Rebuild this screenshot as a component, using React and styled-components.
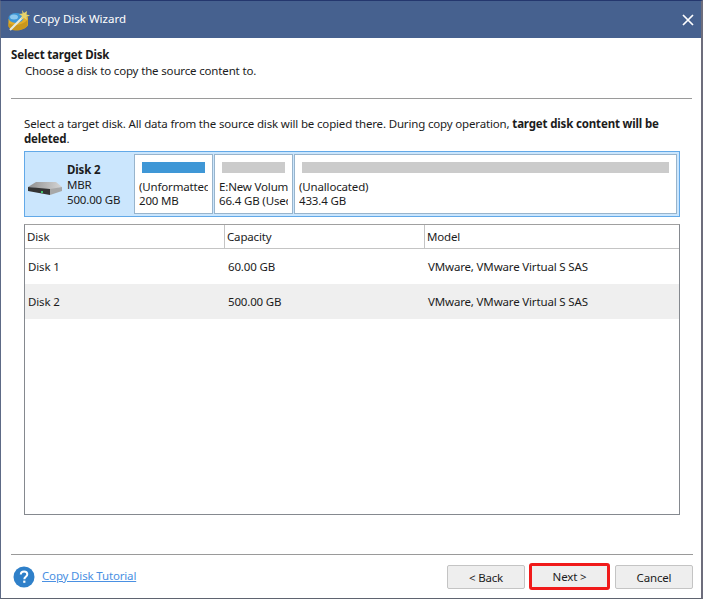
import React from "react";
import styled, { createGlobalStyle } from "styled-components";

const Global = createGlobalStyle`
  html, body { margin: 0; padding: 0; background: #fff; }
  body { font-family: "Noto Sans", "Open Sans", sans-serif; font-size: 11.5px; letter-spacing: -0.16px; color: #1c1c1c; }
`;

const Win = styled.div`
  width: 703px;
  height: 599px;
  box-sizing: border-box;
  display: flex;
  flex-direction: column;
  background: #fff;
  border-left: 1px solid #5d6a86;
  border-right: 2px solid #6d6d7c;
  border-bottom: 1px solid #5f6470;
  border-top: 1px solid #24376e;
  overflow: hidden;
`;
const TitleBar = styled.div`
  height: 37px;
  flex: none;
  background: #46618f;
  display: flex;
  align-items: center;
  padding: 0 7px 0 6px;
  color: #fff;
  font-size: 11.5px;
  letter-spacing: 0;
`;
const TitleText = styled.span`
  margin: 0 0 2px 2px;
  flex: 1;
`;
const Header = styled.div`
  padding: 9px 9px 0 10px;
`;
const Heading = styled.div`
  font-weight: 700;
  line-height: 16px;
`;
const SubHeading = styled.div`
  padding-left: 14px;
  line-height: 16px;
`;
const Rule = styled.div`
  height: 1px;
  background: #9a9a9a;
  margin: ${(p) => p.$margin};
`;
const Content = styled.div`
  padding: 0 21px 0 23px;
  flex: 1;
  display: flex;
  flex-direction: column;
`;
const Intro = styled.div`
  line-height: 15px;
  margin-top: 17px;
  height: 30px;
`;
const DiskMap = styled.div`
  margin-top: 5px;
  height: 66px;
  box-sizing: border-box;
  display: flex;
  gap: 1px;
  border: 1px solid #62a9e8;
  background: #cbe6fd;
  padding: 2px;
`;
const DiskInfo = styled.div`
  width: 106px;
  flex: none;
  display: flex;
  align-items: center;
  gap: 5px;
  padding-left: 1px;
  box-sizing: border-box;
  line-height: 15px;
`;
const DiskGlyph = styled.div`
  display: flex;
  margin-top: 8px;
`;
const DiskName = styled.div`
  font-weight: 700;
`;
const Partition = styled.div`
  box-sizing: border-box;
  width: ${(p) => p.$width};
  flex: ${(p) => (p.$width ? "none" : 1)};
  background: #fff;
  border: 1px solid #98b4cc;
  padding: 7px 4px 0;
`;
const PartLabel = styled.div`
  line-height: 14px;
  white-space: nowrap;
  overflow: hidden;
`;
const Usage = styled.div`
  height: 11px;
  margin: 0 3px 7px;
  background: ${(p) => p.$color};
`;
const Grid = styled.div`
  margin-top: 7px;
  height: 291px;
  box-sizing: border-box;
  border: 1px solid #85898f;
  border-top-color: #a0a0a0;
`;
const Row = styled.div`
  display: grid;
  grid-template-columns: 200px 200px 1fr;
  height: ${(p) => p.$height};
  background: ${(p) => p.$bg || "transparent"};
  align-items: center;
`;
const HeadRow = styled(Row)`
  border-bottom: 1px solid #c4c4c4;
  box-sizing: border-box;
  align-items: stretch;
`;
const HeadCell = styled.div`
  display: flex;
  align-items: center;
  padding-left: 2px;
  border-right: ${(p) => (p.$last ? "none" : "1px solid #c4c4c4")};
`;
const Cell = styled.div`
  padding-left: 3px;
`;
const Footer = styled.div`
  height: 43px;
  box-sizing: border-box;
  padding: 1px 8px 0 12px;
  display: flex;
  align-items: center;
`;
const HelpLink = styled.a`
  color: #4a90e2;
  text-decoration: underline;
  margin: 0 0 4px 7px;
  flex: 1;
`;
const Btn = styled.button`
  box-sizing: border-box;
  width: 78px;
  height: 24px;
  background: #eeeeee;
  border: 1px solid #c4c4c4;
  border-radius: 2px;
  font: inherit;
  letter-spacing: inherit;
  color: #1c1c1c;
  padding: 0;
`;
const NextBtn = styled(Btn)`
  width: 81px;
  height: 27px;
  margin: -1px 5px 0 4px;
  border: 3px solid #f01a1a;
  border-radius: 3px;
`;

const rows = [
  { name: "Disk 1", cap: "60.00 GB", model: "VMware, VMware Virtual S SAS" },
  { name: "Disk 2", cap: "500.00 GB", model: "VMware, VMware Virtual S SAS", bg: "#efefef" },
];

const Logo = () => (
  <svg width="24" height="24" viewBox="0 0 24 24">
    <path d="M1.500 11v7c1 3 5 4.500 10 4s9-3 9.500-5V9z" fill="#e3ae27" />
    <path d="M1.500 15c4 3 13 3 19-3v5c-1 3-5 5-9.500 5.500s-8.500-1.500-9.500-4z" fill="#c9971d" />
    <ellipse cx="9" cy="10" rx="7.500" ry="5" fill="#3f97d6" />
    <ellipse cx="7" cy="9" rx="4" ry="2.500" fill="#8cc8ee" />
    <path d="M3 22L17 8" stroke="#e4ebe0" strokeWidth="2.200" />
    <path d="M15 2l2 3 3-2-.5 3.500 3.500 1-3.500 1.500.5 3-3-2-3 1.500 1-3.500-3-2 3.500-.5z" fill="#e6d26a" />
  </svg>
);

const DiskIcon = () => (
  <svg width="34" height="13" viewBox="0 0 34 13">
    <defs>
      <linearGradient id="diskTop" x1="0" y1="0" x2="1" y2="0">
        <stop offset="0" stopColor="#8f8f8f" />
        <stop offset="1" stopColor="#d6d6d6" />
      </linearGradient>
    </defs>
    <path d="M0 5L8 0h20l6 5-12 3z" fill="url(#diskTop)" />
    <path d="M22 7l12-2v4l-12 4z" fill="#a8a8a8" />
    <path d="M0 5l22 2v6L0 9z" fill="#343434" />
    <rect x="13" y="9" width="2" height="2" fill="#43c46a" />
  </svg>
);

const CloseIcon = () => (
  <svg width="12" height="12" viewBox="0 0 12 12">
    <path d="M1 1l10 10M11 1L1 11" stroke="#fff" strokeWidth="1.700" />
  </svg>
);

const HelpIcon = () => (
  <svg width="22" height="22" viewBox="0 0 22 22">
    <circle cx="11" cy="11" r="10.500" fill="#2f80c9" />
    <path d="M7.800 8.600c0-2 1.400-3.100 3.300-3.100s3.200 1.100 3.200 2.800c0 2.500-3 2.500-3 5" fill="none" stroke="#fff" strokeWidth="2" />
    <rect x="10.200" y="14.600" width="2.200" height="2.200" fill="#fff" />
  </svg>
);

export default function App() {
  return (
    <>
      <Global />
      <Win>
        <TitleBar>
          <Logo />
          <TitleText>Copy Disk Wizard</TitleText>
          <CloseIcon />
        </TitleBar>
        <Header>
          <Heading>Select target Disk</Heading>
          <SubHeading>Choose a disk to copy the source content to.</SubHeading>
          <Rule $margin="19px 0 0" />
        </Header>
        <Content>
          <Intro>
            Select a target disk. All data from the source disk will be copied there. During copy operation,{" "}
            <b>target disk content will be deleted</b>.
          </Intro>
          <DiskMap>
            <DiskInfo>
              <DiskGlyph>
                <DiskIcon />
              </DiskGlyph>
              <div>
                <DiskName>Disk 2</DiskName>
                <div>MBR</div>
                <div>500.00 GB</div>
              </div>
            </DiskInfo>
            <Partition $width="79px">
              <Usage $color="#3f97d6" />
              <PartLabel>
                (Unformatted
                <br />
                200 MB
              </PartLabel>
            </Partition>
            <Partition $width="79px">
              <Usage $color="#cbcbcb" />
              <PartLabel>
                E:New Volume
                <br />
                66.4 GB (Used
              </PartLabel>
            </Partition>
            <Partition>
              <Usage $color="#cbcbcb" />
              <PartLabel>
                (Unallocated)
                <br />
                433.4 GB
              </PartLabel>
            </Partition>
          </DiskMap>
          <Grid>
            <HeadRow $height="24px">
              <HeadCell>Disk</HeadCell>
              <HeadCell>Capacity</HeadCell>
              <HeadCell $last>Model</HeadCell>
            </HeadRow>
            {rows.map((r) => (
              <Row key={r.name} $height="35px" $bg={r.bg}>
                <Cell>{r.name}</Cell>
                <Cell>{r.cap}</Cell>
                <Cell>{r.model}</Cell>
              </Row>
            ))}
          </Grid>
        </Content>
        <Rule $margin="0 8px 0 10px" />
        <Footer>
          <HelpIcon />
          <HelpLink>Copy Disk Tutorial</HelpLink>
          <Btn>&lt; Back</Btn>
          <NextBtn>Next &gt;</NextBtn>
          <Btn>Cancel</Btn>
        </Footer>
      </Win>
    </>
  );
}
